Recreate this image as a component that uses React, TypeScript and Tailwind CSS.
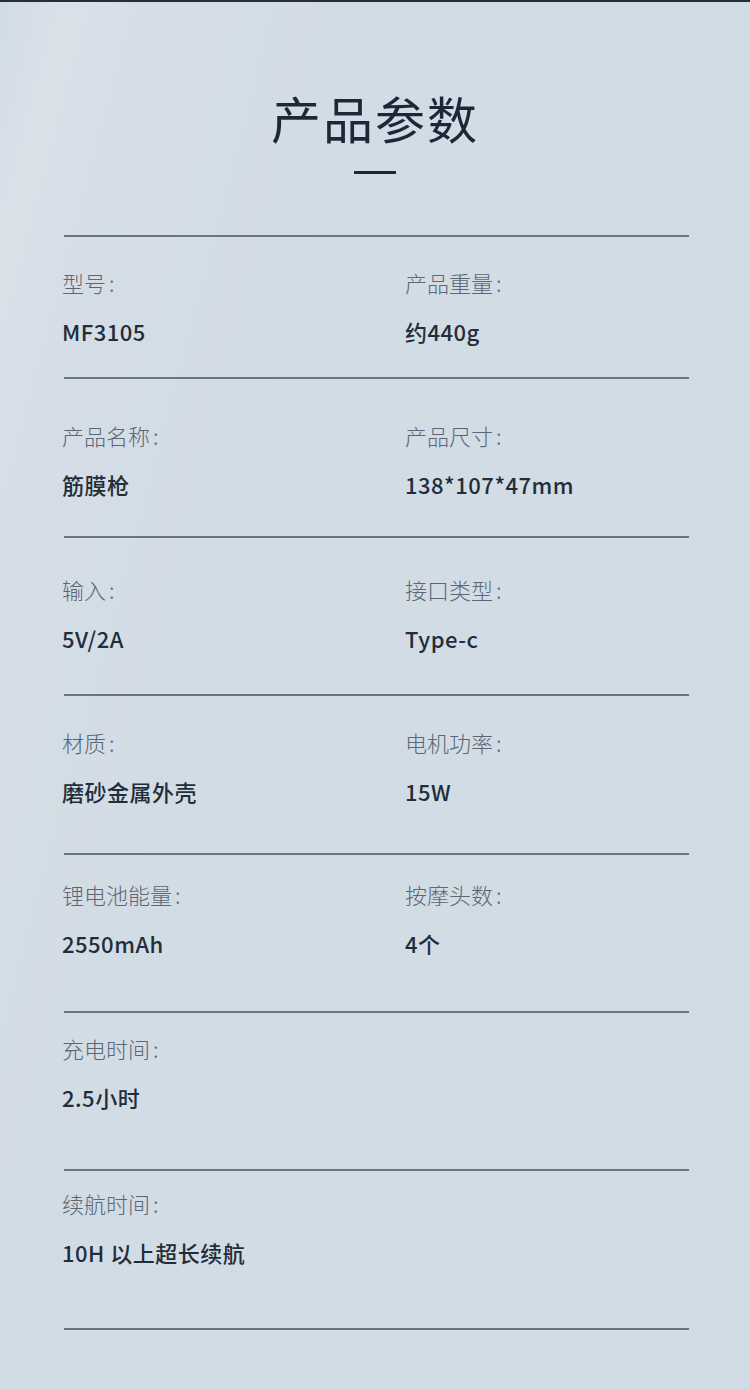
const rows = [
  { items: [["型号", "MF3105"], ["产品重量", "约440g"]], box: "h-[140px] pt-[34px]" },
  { items: [["产品名称", "筋膜枪"], ["产品尺寸", "138*107*47mm"]], box: "h-[157px] pt-[45px]" },
  { items: [["输入", "5V/2A"], ["接口类型", "Type-c"]], box: "h-[156px] pt-[40px]" },
  { items: [["材质", "磨砂金属外壳"], ["电机功率", "15W"]], box: "h-[157px] pt-[35px]" },
  { items: [["锂电池能量", "2550mAh"], ["按摩头数", "4个"]], box: "h-[156px] pt-[28px]" },
  { items: [["充电时间", "2.5小时"]], box: "h-[156px] pt-[24px]" },
  { items: [["续航时间", "10H 以上超长续航"]], box: "h-[157px] pt-[21px]" },
];

function Line() {
  return <div className="h-[2px] bg-[#6a7583]" />;
}

export default function App() {
  return (
    <div
      className="w-[750px] h-[1389px] overflow-hidden border-t-2 border-[#262d3a] bg-[#d2dce5] bg-[linear-gradient(105deg,#d2dce5_0%,#d9e1e9_6%,#d5dee7_14%,#d2dce5_35%,#d2dce5_100%)]"
      style={{ fontFamily: '"Noto Sans CJK SC", "Noto Sans", sans-serif' }}
    >
      <div className="flex flex-col items-center pt-[90px]">
        <h1 className="text-[50px] leading-none font-normal text-[#1b2838] tracking-[2px]">产品参数</h1>
        <div className="mt-[29px] w-[42px] h-[3px] bg-[#1b2838]" />
      </div>

      <div className="mx-[64px] mt-[61px] w-[625px]">
        <Line />
        {rows.map((row, i) => (
          <div key={i}>
            <div className={`grid grid-cols-[343px_1fr] ${row.box}`}>
              {row.items.map(([label, value]) => (
                <div key={label} className="-ml-[2px]">
                  <div className="text-[22px] leading-none font-light text-[#5b6775]">
                    {label}
                    <span className="ml-[3px]">:</span>
                  </div>
                  <div className="mt-[27px] text-[22px] leading-none font-medium tracking-[0.5px] text-[#222d3a]">
                    {value}
                  </div>
                </div>
              ))}
            </div>
            <Line />
          </div>
        ))}
      </div>
    </div>
  );
}
